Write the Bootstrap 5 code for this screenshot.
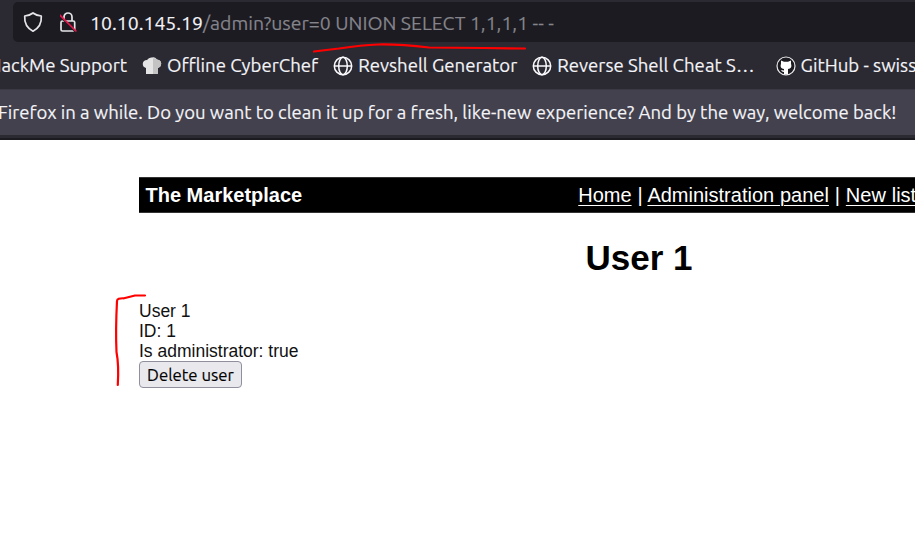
<!DOCTYPE html>
<html lang="en">
<head>
<meta charset="utf-8">
<meta name="viewport" content="width=device-width, initial-scale=1">
<title>User 1</title>
<link href="https://cdn.jsdelivr.net/npm/bootstrap@5.3.0/dist/css/bootstrap.min.css" rel="stylesheet">
<style>
body{width:915px;height:538px;background:#fff;font-family:"Liberation Sans",Arial,sans-serif;font-size:17.5px;line-height:20px;color:#111}
.chrome{background:#2b2a33;color:#f4f4f8;font-family:Ubuntu,"Noto Sans",sans-serif;height:140px;border-bottom:2px solid #1c1b22;font-size:18.6px;-webkit-text-stroke:.15px}
.chrome span{white-space:pre}
.urlbar{height:40px;margin:2px 0 0 13px;background:#1c1b22;border-radius:5px 0 0 5px;padding-left:9px;font-size:19.45px}
.urlbar svg{flex:none}
.host{margin-left:12px;padding-top:2px}
.path{color:#85848b;padding-top:2px}
.marks{height:47px;margin-left:-11.5px}
.marks-item{flex:none;margin-right:15px}
.marks-item svg{flex:none;margin-right:5px}
.marks-item span,.marks-first{padding-top:1px}
.cheat{margin-right:21px}
.notice{height:46px;background:#42414d;border-top:1px solid #3a3944;font-size:18.53px}
.notice span{margin-left:-2px}
.site{width:776px;margin:37px 0 0 139px}
.topbar{width:776px;height:36px;background:#000;border:1px solid #333;border-width:1px 0;color:#fff;font-size:20px;padding-left:6.5px}
.links{margin-left:276px;word-spacing:.3px}
.topbar a{color:#fff;text-underline-offset:3px;text-decoration-thickness:1px}
.site h1{width:1000px;font-size:35px;line-height:40px;margin:25px 0 23px;color:#000}
.del{font:16.8px/23px Ubuntu,"Noto Sans",sans-serif;width:103px;height:27px;border:1px solid #8f8f9d;border-radius:4px;background:#e9e9ed;color:#000;padding:0;-webkit-text-stroke:.15px}
.ink{left:0;top:0;pointer-events:none}
</style>
<script src="https://cdn.jsdelivr.net/npm/bootstrap@5.3.0/dist/js/bootstrap.bundle.min.js"></script>
</head>
<body class="overflow-hidden position-relative">
<header class="chrome overflow-hidden d-flex flex-column">
  <div class="urlbar d-flex align-items-center">
    <svg width="22" height="22" viewBox="0 0 22 22" fill="none" stroke="#e5e5e8" stroke-width="1.7" stroke-linejoin="round"><path d="M11 2Q14 4.500 19.300 5Q20 15.500 11 20.200Q2 15.500 2.700 5Q8 4.500 11 2Z"/></svg>
    <svg class="ms-3" width="18" height="22" viewBox="0 0 18 22" fill="none" stroke="#e5e5e8" stroke-width="1.7"><rect x="1" y="10" width="13.7" height="10" rx="1.5"/><path d="M4 10V6a4 4 0 0 1 8 0V10"/><path d="M-.5 5.200 15.500 21" stroke="#1c1b22" stroke-width="1.300"/><path d="M-.8 3.500 16.400 20.500" stroke="#e8174b" stroke-width="1.700"/></svg>
    <span class="host">10.10.145.19</span><span class="path">/admin?user=0 UNION SELECT 1,1,1,1 -- -</span>
  </div>
  <nav class="marks d-flex align-items-center">
    <span class="marks-item marks-first">HackMe Support</span>
    <span class="marks-item d-flex align-items-center"><svg width="20" height="20" viewBox="0 0 20 20"><path d="M4 18V12Q.5 11 .8 7.500Q1.200 4 5 4Q7 1 10 1.500Q13 .8 15 3.500Q19 4 19.200 7.500Q19 11 16 12V18Z" fill="#e4e4e4"/><path d="M11 2.500Q13 1.500 15 3.500Q19 4 19.200 7.500Q19 11 16 12V18H11Z" fill="#c3c3c3"/></svg><span>Offline CyberChef</span></span>
    <span class="marks-item d-flex align-items-center"><svg width="20" height="20" viewBox="0 0 20 20" fill="none" stroke="#fbfbfe" stroke-width="1.5"><circle cx="10" cy="10" r="8.700"/><ellipse cx="10" cy="10" rx="4.300" ry="8.700"/><path d="M1.300 10H18.700"/></svg><span>Revshell Generator</span></span>
    <span class="marks-item cheat d-flex align-items-center"><svg width="20" height="20" viewBox="0 0 20 20" fill="none" stroke="#fbfbfe" stroke-width="1.5"><circle cx="10" cy="10" r="8.700"/><ellipse cx="10" cy="10" rx="4.300" ry="8.700"/><path d="M1.300 10H18.700"/></svg><span>Reverse Shell Cheat S…</span></span>
    <span class="marks-item d-flex align-items-center"><svg width="20" height="20" viewBox="0 0 20 20"><circle cx="10" cy="10" r="9" fill="#1c1b22" stroke="#e8e8e8" stroke-width="1.2"/><path d="M5 4.500 8 5.800H12L15 4.500V7.500Q16.500 12.500 12 13V18.500H8V16Q5.500 16 5 14L8 14.500V13Q3.500 12.500 5 7.500Z" fill="#fff"/></svg><span>GitHub - swiss</span></span>
  </nav>
  <div class="notice d-flex align-items-center"><span>Firefox in a while. Do you want to clean it up for a fresh, like-new experience? And by the way, welcome back!</span></div>
</header>
<main class="site">
  <div class="topbar d-flex align-items-center overflow-hidden text-nowrap"><strong class="flex-shrink-0">The Marketplace</strong><div class="links flex-shrink-0"><a href="#">Home</a> | <a href="#">Administration panel</a> | <a href="#">New list</a></div></div>
  <h1 class="text-center fw-bold">User 1</h1>
  <div>User 1<br>ID: 1<br>Is administrator: true</div>
  <button class="del d-block">Delete user</button>
</main>
<svg class="ink position-absolute" width="915" height="538" fill="none" stroke="#f00" stroke-width="2.2" stroke-linecap="round" stroke-linejoin="round"><path d="M314 51.500 339 48.500Q362 45 378 44.500 399 44 429 47.500L484 48 525 48.500"/><path d="M145 295.500H135L124 298.300Q117 298 117 301Q115.500 330 116.500 352 119 365 117.800 385"/></svg>
</body>
</html>
